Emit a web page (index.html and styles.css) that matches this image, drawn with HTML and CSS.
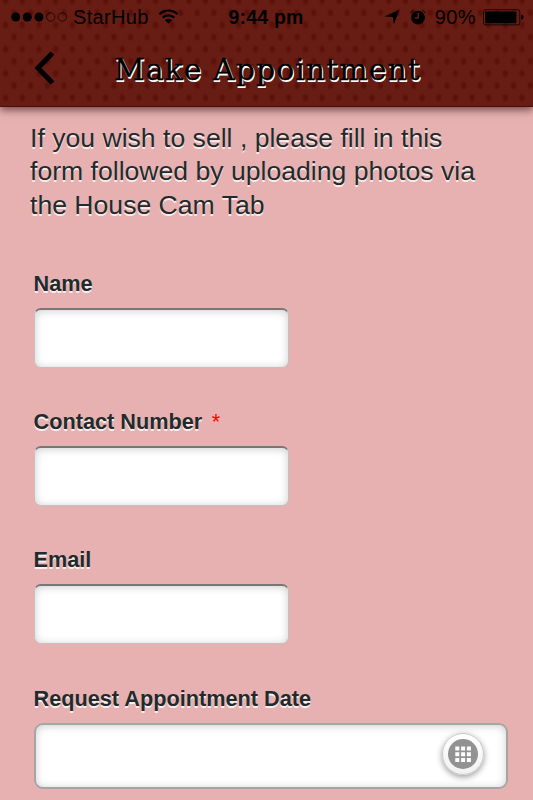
FILE: index.html
```html
<!DOCTYPE html>
<html lang="en">

<head>
    <meta charset="UTF-8">
    <meta name="viewport" content="width=device-width, initial-scale=1.0">
    <title>Make Appointment</title>
    <link rel="stylesheet" href="styles.css">
</head>

<body>
    <header class="header">
        <div class="status-bar">
            <div class="status-left">
                <svg class="signal" width="57" height="10" viewBox="0 0 57 10">
                    <circle cx="4.7" cy="5" r="4.5" />
                    <circle cx="16.3" cy="5" r="4.5" />
                    <circle cx="28" cy="5" r="4.5" />
                    <circle class="empty" cx="39.7" cy="5" r="4.2" />
                    <circle class="empty" cx="51.3" cy="5" r="4.2" />
                </svg>
                <span class="carrier">StarHub</span>
                <svg class="wifi" width="21" height="16" viewBox="0 0 22 16">
                    <path class="arc" d="M1.5 5.2a13.2 13.2 0 0 1 19 0M5 8.9a8.3 8.3 0 0 1 12 0" />
                    <path d="M11 15.2l-3.8-3.7a5.4 5.4 0 0 1 7.6 0z" />
                </svg>
            </div>
            <span class="time">9:44 pm</span>
            <div class="status-right">
                <svg class="location" width="16" height="16" viewBox="0 0 16 16">
                    <path d="M15.6.4L9.8 15.6L8.9 8.1L.4 7.6z" />
                </svg>
                <svg class="alarm" width="16" height="16" viewBox="0 0 16 16">
                    <circle cx="8" cy="8.6" r="6.9" />
                    <path class="bell" d="M.6 4.2A8 8 0 0 1 3.6 1M15.4 4.2A8 8 0 0 0 12.4 1" />
                    <path class="hands" d="M8.3 4v4.9H4.8" />
                </svg>
                <span class="percent">90%</span>
                <svg class="battery" width="41" height="17" viewBox="0 0 41 17">
                    <rect class="case" x=".5" y=".7" width="36.3" height="15.2" rx="2.3" />
                    <rect x="2.2" y="2.4" width="31.2" height="11.8" rx=".6" />
                    <path d="M38.3 5.5q2.2.8 2.2 2.8t-2.2 2.8z" />
                </svg>
            </div>
        </div>
        <div class="title-bar">
            <a href="#" class="back-button" aria-label="Back">
                <svg width="20" height="34" viewBox="0 0 20 34">
                    <path d="M17.5 2L3 17l14.5 15" />
                </svg>
            </a>
            <h1>Make Appointment</h1>
        </div>
    </header>

    <form class="form">
        <p class="intro">If you wish to sell , please fill in this form followed by uploading photos via the House Cam Tab</p>

        <div class="input-group">
            <label for="name">Name</label>
            <input type="text" id="name">
        </div>

        <div class="input-group">
            <label for="contact">Contact Number <span class="required">*</span></label>
            <input type="tel" id="contact">
        </div>

        <div class="input-group">
            <label for="email">Email</label>
            <input type="email" id="email">
        </div>

        <div class="input-group">
            <label for="date">Request Appointment Date</label>
            <div class="date-field">
                <input type="text" id="date">
                <button type="button" class="date-button" aria-label="Choose date">
                    <svg width="30" height="30" viewBox="0 0 30 30">
                        <circle cx="15" cy="15" r="15" />
                        <path d="M7.3 7.5h4v4h-4zM13.1 7.5h4v4h-4zM18.9 7.5h4v4h-4zM7.3 13.2h4v4h-4zM13.1 13.2h4v4h-4zM18.9 13.2h4v4h-4zM7.3 18.9h4v4h-4zM13.1 18.9h4v4h-4zM18.9 18.9h4v4h-4z" />
                    </svg>
                </button>
            </div>
        </div>
    </form>
</body>

</html>
```
FILE: styles.css
```css
* {
    box-sizing: border-box;
}

body {
    margin: 0;
    height: 800px;
    overflow: hidden;
    background-color: #e8b1b1;
    font-family: "Liberation Sans", Arial, sans-serif;
    color: #222b2b;
}

.header {
    height: 107px;
    background-color: #671d13;
    background-image:
        radial-gradient(ellipse 3.6px 4.6px at 4px 6px, #5b100a 40%, transparent 100%),
        radial-gradient(ellipse 3.6px 4.6px at 12.33px 18.1px, #5b100a 40%, transparent 100%);
    background-size: 16.667px 24.25px;
    background-position: 1.67px -5.3px;
    border-bottom: 1px solid #4b0e09;
    box-shadow: 0 3px 8px rgba(50, 15, 15, 0.65);
}

.status-bar {
    display: grid;
    grid-template-columns: 1fr auto 1fr;
    align-items: center;
    height: 34px;
    padding: 0 9px 0 11px;
    font-size: 20px;
    color: #000;
}

.status-left,
.status-right {
    display: flex;
    align-items: center;
}

.status-right {
    justify-content: flex-end;
}

.carrier {
    margin-left: 5px;
    letter-spacing: 0.35px;
}

.wifi {
    margin-left: 9px;
    margin-top: -1px;
}

.wifi .arc {
    fill: none;
    stroke: #000;
    stroke-width: 2.3;
}

.signal .empty {
    fill: none;
    stroke: #000;
    stroke-width: 0.7;
}

.time {
    margin-right: 3px;
    font-weight: bold;
    font-size: 19.5px;
    letter-spacing: 0.2px;
}

.location {
    margin-right: 1px;
}

.alarm {
    margin-left: 9px;
}

.alarm .bell {
    fill: none;
    stroke: #000;
    stroke-width: 1;
}

.alarm .hands {
    fill: none;
    stroke: #671d13;
    stroke-width: 1.5;
}

.percent {
    margin: 0 7px 0 9px;
    letter-spacing: 0.4px;
}

.battery .case {
    fill: none;
    stroke: #000;
    stroke-width: 0.8;
}

.title-bar {
    display: flex;
    align-items: center;
    height: 68px;
    padding-left: 35px;
}

.back-button {
    display: flex;
    width: 79px;
}

.back-button path {
    fill: none;
    stroke: #000;
    stroke-width: 5;
}

h1 {
    margin: 4px 0 0;
    font-family: "DejaVu Serif", serif;
    font-size: 30px;
    font-weight: normal;
    line-height: 36px;
    letter-spacing: 1px;
    white-space: nowrap;
    color: #000;
    -webkit-text-stroke: 0.3px #000;
    text-shadow: 1px 1px 0 #fff, 1px 2px 0 #fff;
}

.form {
    padding: 15px 25px 0 30px;
}

.intro {
    width: 460px;
    margin: 0 0 47px;
    font-size: 26.6px;
    line-height: 33.3px;
    text-shadow: 0 2px 0 rgba(255, 255, 255, 0.75);
}

.input-group {
    margin: 0 0 39.28px 4px;
}

label {
    display: block;
    height: 39px;
    margin-left: -0.5px;
    font-size: 21.7px;
    font-weight: bold;
    line-height: 30px;
    text-shadow: 0 2px 0 rgba(255, 255, 255, 0.8);
}

.required {
    margin-left: 3.5px;
    color: #f00;
    font-weight: normal;
    text-shadow: none;
}

input {
    display: block;
    width: 255px;
    height: 60px;
    padding: 0 12px;
    border: 1px solid #c3c0c0;
    border-top: 2px solid #777;
    border-radius: 7px;
    background-color: #fff;
    box-shadow: inset 0 1px 8px rgba(0, 0, 0, 0.2);
    font-size: 22px;
}

.date-field {
    position: relative;
    width: 474px;
}

.date-field input {
    width: 100%;
    height: 66px;
    border: 2px solid #a4a6a6;
    border-radius: 9px;
}

.date-button {
    position: absolute;
    top: 10px;
    right: 24px;
    display: flex;
    align-items: center;
    justify-content: center;
    width: 42px;
    height: 42px;
    padding: 0;
    border: 1px solid #c8c8c8;
    border-radius: 50%;
    background: linear-gradient(#fff, #f1f1f1);
    box-shadow: 0 2px 6px rgba(0, 0, 0, 0.4);
}

.date-button circle {
    fill: #929292;
}

.date-button path {
    fill: #fff;
}
```
